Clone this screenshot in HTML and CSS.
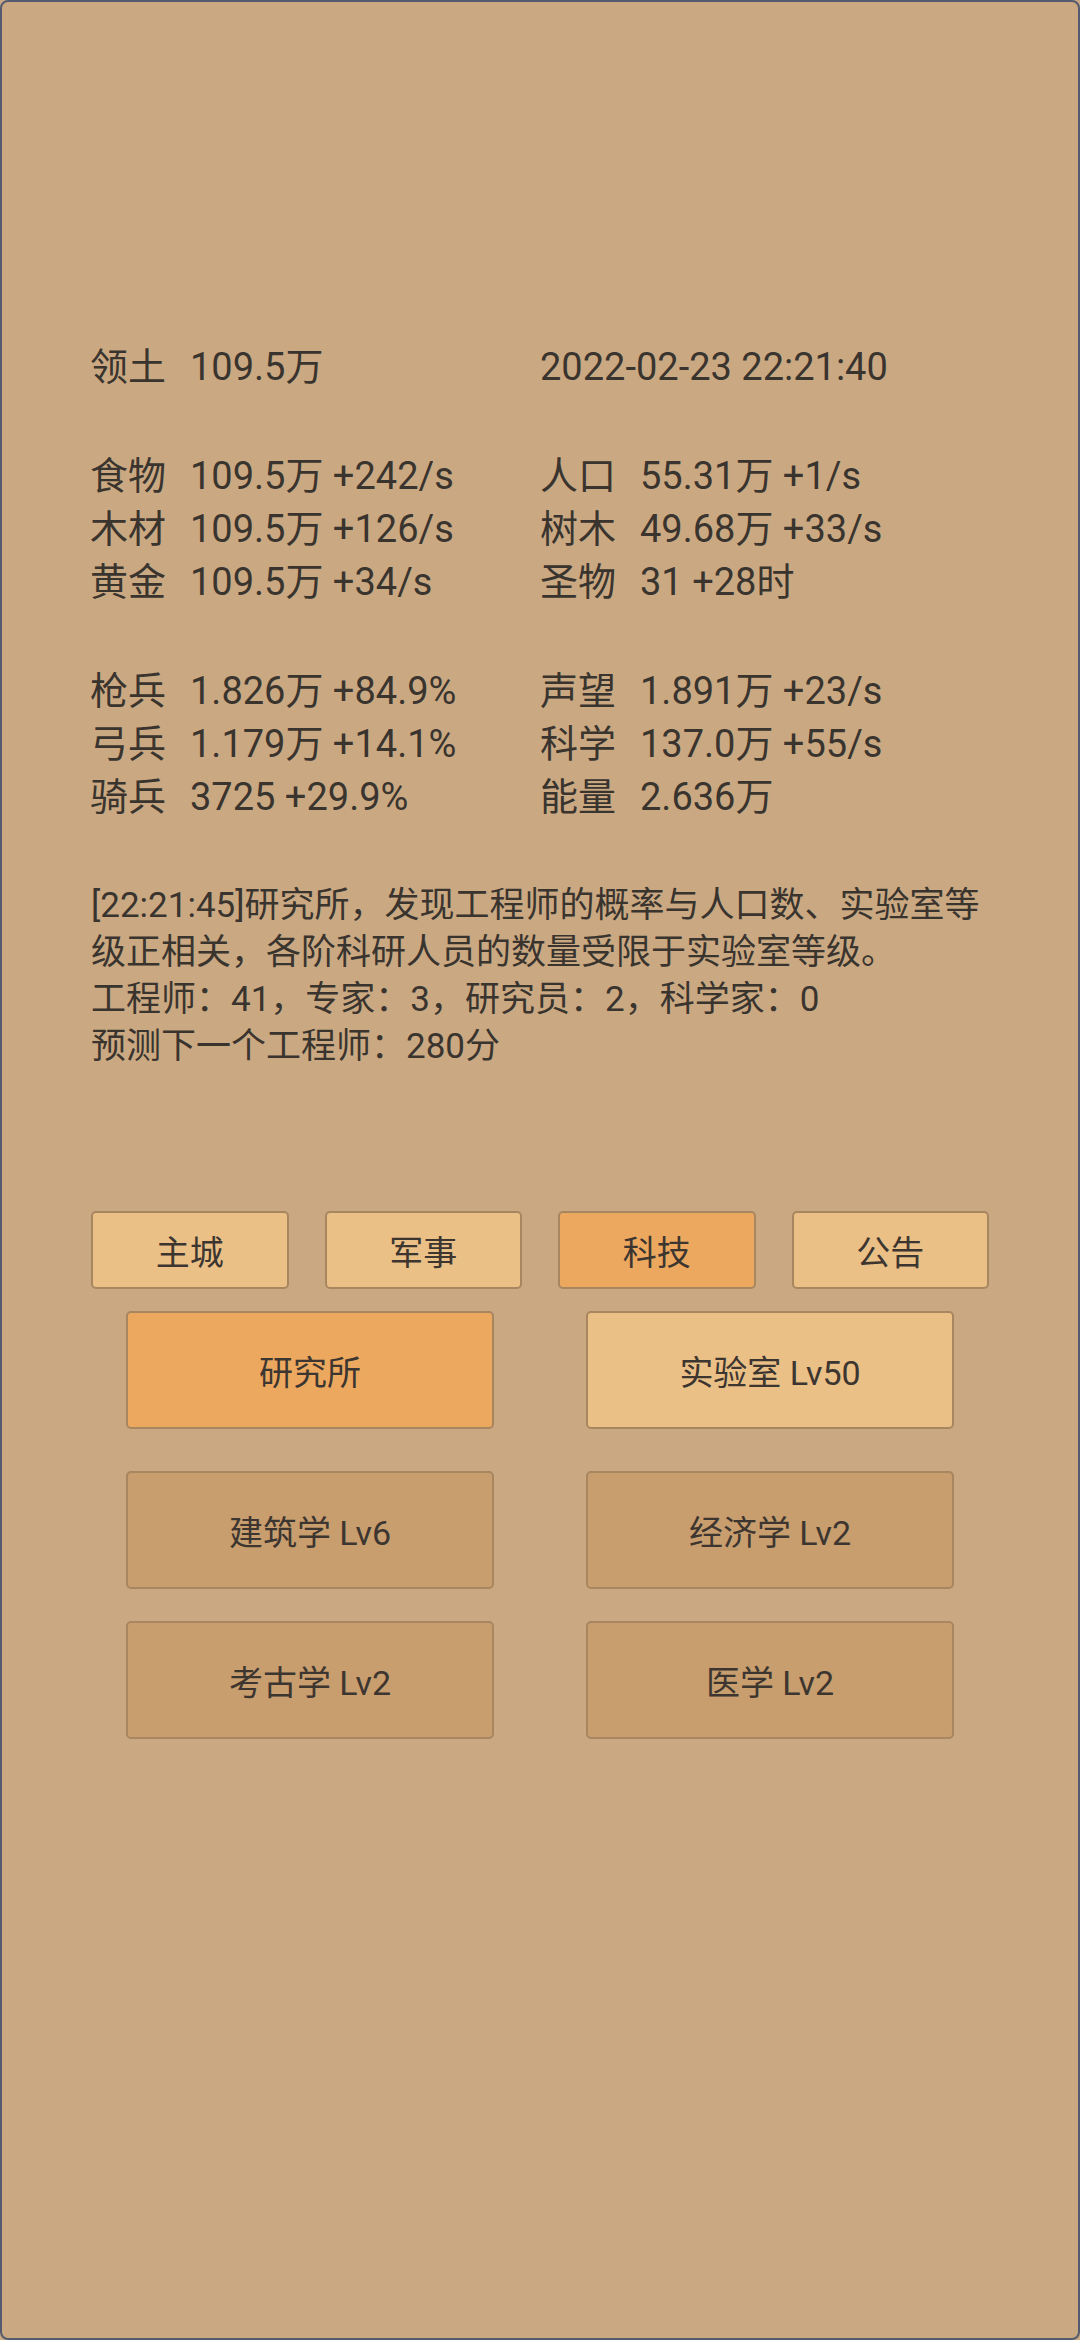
FILE: index.html
```html
<!DOCTYPE html>
<html lang="zh-CN">
<head>
<meta charset="utf-8">
<title>研究所</title>
<link rel="stylesheet" href="styles.css">
</head>
<body>
<div class="screen">
  <section class="stats">
    <div class="group">
      <div class="cell"><span class="lbl">领土</span><span class="val">109.5万</span></div>
      <div class="cell">2022-02-23 22:21:40</div>
    </div>
    <div class="group">
      <div class="cell"><span class="lbl">食物</span><span class="val">109.5万 +242/s</span></div>
      <div class="cell"><span class="lbl">人口</span><span class="val">55.31万 +1/s</span></div>
      <div class="cell"><span class="lbl">木材</span><span class="val">109.5万 +126/s</span></div>
      <div class="cell"><span class="lbl">树木</span><span class="val">49.68万 +33/s</span></div>
      <div class="cell"><span class="lbl">黄金</span><span class="val">109.5万 +34/s</span></div>
      <div class="cell"><span class="lbl">圣物</span><span class="val">31 +28时</span></div>
    </div>
    <div class="group">
      <div class="cell"><span class="lbl">枪兵</span><span class="val">1.826万 +84.9%</span></div>
      <div class="cell"><span class="lbl">声望</span><span class="val">1.891万 +23/s</span></div>
      <div class="cell"><span class="lbl">弓兵</span><span class="val">1.179万 +14.1%</span></div>
      <div class="cell"><span class="lbl">科学</span><span class="val">137.0万 +55/s</span></div>
      <div class="cell"><span class="lbl">骑兵</span><span class="val">3725 +29.9%</span></div>
      <div class="cell"><span class="lbl">能量</span><span class="val">2.636万</span></div>
    </div>
  </section>

  <section class="log">
    <p class="line">[22:21:45]研究所，发现工程师的概率与人口数、实验室等</p>
    <p class="line">级正相关，各阶科研人员的数量受限于实验室等级。</p>
    <p class="line">工程师：41，专家：3，研究员：2，科学家：0</p>
    <p class="line">预测下一个工程师：280分</p>
  </section>

  <nav class="tabs">
    <div class="btn tab">主城</div>
    <div class="btn tab">军事</div>
    <div class="btn tab active">科技</div>
    <div class="btn tab">公告</div>
  </nav>

  <div class="sub-top">
    <div class="btn big active">研究所</div>
    <div class="btn big">实验室 Lv50</div>
  </div>

  <div class="sub-list">
    <div class="btn big dim">建筑学 Lv6</div>
    <div class="btn big dim">经济学 Lv2</div>
    <div class="btn big dim">考古学 Lv2</div>
    <div class="btn big dim">医学 Lv2</div>
  </div>
</div>
</body>
</html>
```

FILE: styles.css
```css
html, body {
  margin: 0;
  padding: 0;
  background: #caa982;
}

.screen {
  box-sizing: border-box;
  width: 1080px;
  height: 2340px;
  border: 2px solid #555b6e;
  border-radius: 8px;
  background: #caa982;
  color: #3a342f;
  font-family: "Roboto", "Noto Sans CJK SC", sans-serif;
  overflow: hidden;
}

.stats {
  padding-top: 339px;
  padding-left: 88px;
  font-size: 38px;
}

.group {
  display: grid;
  grid-template-columns: 450px auto;
  grid-auto-rows: 53px;
  align-items: center;
}

.group + .group {
  margin-top: 56px;
}

.cell {
  display: flex;
  white-space: nowrap;
  line-height: 53px;
}

.lbl {
  width: 76px;
  margin-right: 24px;
}

.log {
  margin-top: 58px;
  padding-left: 89px;
  font-size: 35px;
}

.line {
  margin: 0;
  line-height: 47px;
  white-space: nowrap;
}

.tabs {
  margin: 141px auto 0;
  width: 898px;
  display: grid;
  grid-template-columns: repeat(4, 1fr);
  gap: 36px;
}

.btn {
  box-sizing: border-box;
  display: flex;
  align-items: center;
  justify-content: center;
  border: 2px solid #a8865f;
  border-radius: 5px;
  background: #ebc087;
  font-size: 34px;
  color: #3d3630;
  white-space: nowrap;
}

.tab {
  height: 78px;
}

.btn.active {
  background: #eca85f;
}

.btn.dim {
  background: #c99e6e;
}

.sub-top,
.sub-list {
  width: 828px;
  margin: 22px auto 0;
  display: grid;
  grid-template-columns: repeat(2, 1fr);
  column-gap: 92px;
}

.sub-list {
  margin-top: 42px;
  row-gap: 32px;
}

.big {
  height: 118px;
}
```
